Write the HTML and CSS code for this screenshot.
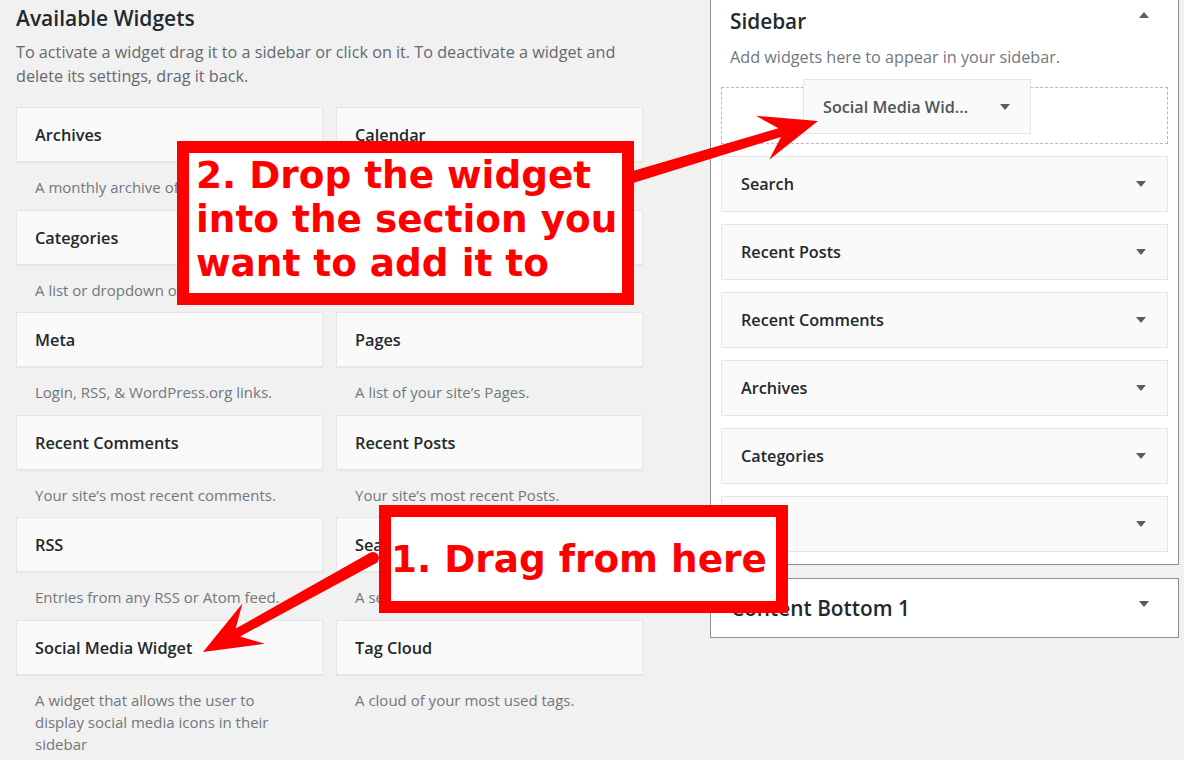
FILE: index.html
```html
<!DOCTYPE html>
<html lang="en">
<head>
<meta charset="utf-8">
<title>Widgets</title>
<link rel="stylesheet" href="styles.css">
</head>
<body>
<div class="page">
  <section class="available">
    <h2 class="section-title">Available Widgets</h2>
    <p class="intro">To activate a widget drag it to a sidebar or click on it. To deactivate a widget and delete its settings, drag it back.</p>
    <div class="widget-grid">
      <div class="widget"><div class="widget-top">Archives</div><div class="widget-desc">A monthly archive of your site’s Posts.</div></div>
      <div class="widget"><div class="widget-top">Calendar</div><div class="widget-desc">A calendar of your site’s Posts.</div></div>
      <div class="widget"><div class="widget-top">Categories</div><div class="widget-desc">A list or dropdown of categories.</div></div>
      <div class="widget"><div class="widget-top">Custom Menu</div><div class="widget-desc">Add a custom menu to your sidebar.</div></div>
      <div class="widget"><div class="widget-top">Meta</div><div class="widget-desc">Login, RSS, &amp; WordPress.org links.</div></div>
      <div class="widget"><div class="widget-top">Pages</div><div class="widget-desc">A list of your site’s Pages.</div></div>
      <div class="widget"><div class="widget-top">Recent Comments</div><div class="widget-desc">Your site’s most recent comments.</div></div>
      <div class="widget"><div class="widget-top">Recent Posts</div><div class="widget-desc">Your site’s most recent Posts.</div></div>
      <div class="widget"><div class="widget-top">RSS</div><div class="widget-desc">Entries from any RSS or Atom feed.</div></div>
      <div class="widget"><div class="widget-top">Search</div><div class="widget-desc">A search form for your site.</div></div>
      <div class="widget"><div class="widget-top">Social Media Widget</div><div class="widget-desc">A widget that allows the user to display social media icons in their sidebar</div></div>
      <div class="widget"><div class="widget-top">Tag Cloud</div><div class="widget-desc">A cloud of your most used tags.</div></div>
    </div>
  </section>

  <aside class="sidebars">
    <div class="panel panel-open">
      <div class="panel-head">
        <h2 class="panel-title">Sidebar</h2>
        <span class="tri tri-up head-tri"></span>
      </div>
      <p class="panel-desc">Add widgets here to appear in your sidebar.</p>
      <div class="drop-zone"></div>
      <div class="sb-widget"><span>Search</span><span class="tri tri-down"></span></div>
      <div class="sb-widget"><span>Recent Posts</span><span class="tri tri-down"></span></div>
      <div class="sb-widget"><span>Recent Comments</span><span class="tri tri-down"></span></div>
      <div class="sb-widget"><span>Archives</span><span class="tri tri-down"></span></div>
      <div class="sb-widget"><span>Categories</span><span class="tri tri-down"></span></div>
      <div class="sb-widget"><span>Meta</span><span class="tri tri-down"></span></div>
    </div>
    <div class="panel panel-closed">
      <h2 class="panel-title">Content Bottom 1</h2>
      <span class="tri tri-down closed-tri"></span>
    </div>
  </aside>
</div>

<div class="drag-helper"><span>Social Media Wid...</span><span class="tri tri-down"></span></div>

<svg class="arrows" width="1184" height="760" viewBox="0 0 1184 760" aria-hidden="true">
  <polygon fill="#ff0000" points="626.7,185.1 781.0,136.9 769.2,159.8 818,121 755.8,115.8 778.4,128.3 623.3,173.7"/>
  <polygon fill="#ff0000" points="375.9,563.2 240.1,636.4 264.8,643.8 203,652 242.4,603.6 235.7,628.6 370.1,552.8"/>
  <circle fill="#ff0000" cx="373" cy="558" r="6"/>
</svg>

<div class="callout callout-drop"><div class="callout-text">2. Drop the widget<br>into the section you<br>want to add it to</div></div>
<div class="callout callout-drag"><div class="callout-text">1. Drag from here</div></div>
</body>
</html>
```

FILE: styles.css
```css
html, body {
  margin: 0;
  padding: 0;
  width: 1184px;
  height: 760px;
  overflow: hidden;
  background: #f1f1f1;
  font-family: "Open Sans", "Liberation Sans", sans-serif;
  color: #23282d;
}

body {
  position: relative;
}

.page {
  display: flex;
  gap: 67px;
  align-items: flex-start;
}

/* ---------- Available widgets ---------- */
.available {
  flex: none;
  width: 627px;
  padding-left: 16px;
}

.section-title {
  margin: 4px 0 0;
  font-size: 21px;
  line-height: 28px;
  font-weight: 600;
}

.intro {
  margin: 8px 0 0;
  font-size: 16.2px;
  line-height: 24px;
  color: #646970;
}

.widget-grid {
  display: grid;
  grid-template-columns: 307px 307px;
  column-gap: 13px;
  margin-top: 19px;
}

.widget-top {
  height: 53px;
  line-height: 54px;
  border: 1px solid #e5e5e5;
  background: #fafafa;
  padding: 0 18px;
  font-size: 16.3px;
  font-weight: 600;
  box-shadow: 0 1px 1px rgba(0, 0, 0, 0.04);
}

.widget-desc {
  padding: 14px 19px 11.5px;
  font-size: 15px;
  line-height: 22px;
  color: #72777c;
}

/* ---------- Sidebars ---------- */
.sidebars {
  flex: none;
  width: 469px;
}

.panel {
  background: #fff;
  border: 1px solid #8c8f94;
  box-sizing: border-box;
}

.panel-open {
  border-top: none;
  padding: 0 10px 12px;
}

.panel-head {
  display: flex;
  justify-content: space-between;
  align-items: flex-start;
  padding: 7px 0 0 9px;
}

.panel-title {
  margin: 0;
  font-size: 20.8px;
  line-height: 28px;
  font-weight: 600;
}

.head-tri {
  margin-top: 5px;
  margin-right: 19px;
}

.panel-desc {
  margin: 11px 0 0 9px;
  font-size: 16.2px;
  line-height: 22px;
  color: #72777c;
}

.drop-zone {
  margin-top: 19px;
  margin-bottom: 12px;
  height: 57px;
  box-sizing: border-box;
  border: 1px dashed #b4b9be;
}

.sb-widget {
  display: flex;
  justify-content: space-between;
  align-items: center;
  height: 56px;
  box-sizing: border-box;
  border: 1px solid #e5e5e5;
  background: #fafafa;
  padding: 0 21px 0 19px;
  font-size: 16.2px;
  font-weight: 600;
  margin-bottom: 12px;
}

.sb-widget:last-child {
  margin-bottom: 0;
}

.panel-closed {
  margin-top: 13px;
  height: 60px;
  display: flex;
  justify-content: space-between;
  align-items: center;
  padding: 0 29px 0 20px;
}

.closed-tri {
  align-self: flex-start;
  margin-top: 22px;
}

/* triangles */
.tri {
  display: block;
  width: 0;
  height: 0;
  border-left: 5px solid transparent;
  border-right: 5px solid transparent;
}

.tri-down {
  border-top: 6px solid #555d66;
}

.tri-up {
  border-bottom: 6px solid #555d66;
}

/* ---------- Drag helper (floating) ---------- */
.drag-helper {
  position: absolute;
  left: 803px;
  top: 79px;
  width: 228px;
  height: 55px;
  box-sizing: border-box;
  display: flex;
  justify-content: space-between;
  align-items: center;
  padding: 0 20px 0 19px;
  border: 1px solid #e5e5e5;
  background: #fafafa;
  font-size: 16.2px;
  font-weight: 600;
  color: #4f5459;
}

/* ---------- Annotations ---------- */
.arrows {
  position: absolute;
  left: 0;
  top: 0;
  pointer-events: none;
}

.callout {
  position: absolute;
  box-sizing: border-box;
  border: 12px solid #ff0000;
  background: #fff;
  color: #ff0000;
  font-family: "DejaVu Sans", "Liberation Sans", sans-serif;
  font-weight: bold;
  font-size: 37.4px;
  line-height: 44px;
  white-space: nowrap;
}

.callout-drop {
  left: 177px;
  top: 141px;
  width: 457px;
  height: 164px;
  padding-left: 7px;
}

.callout-drag {
  left: 379px;
  top: 505px;
  width: 409px;
  height: 108px;
  display: flex;
  align-items: center;
}
```
